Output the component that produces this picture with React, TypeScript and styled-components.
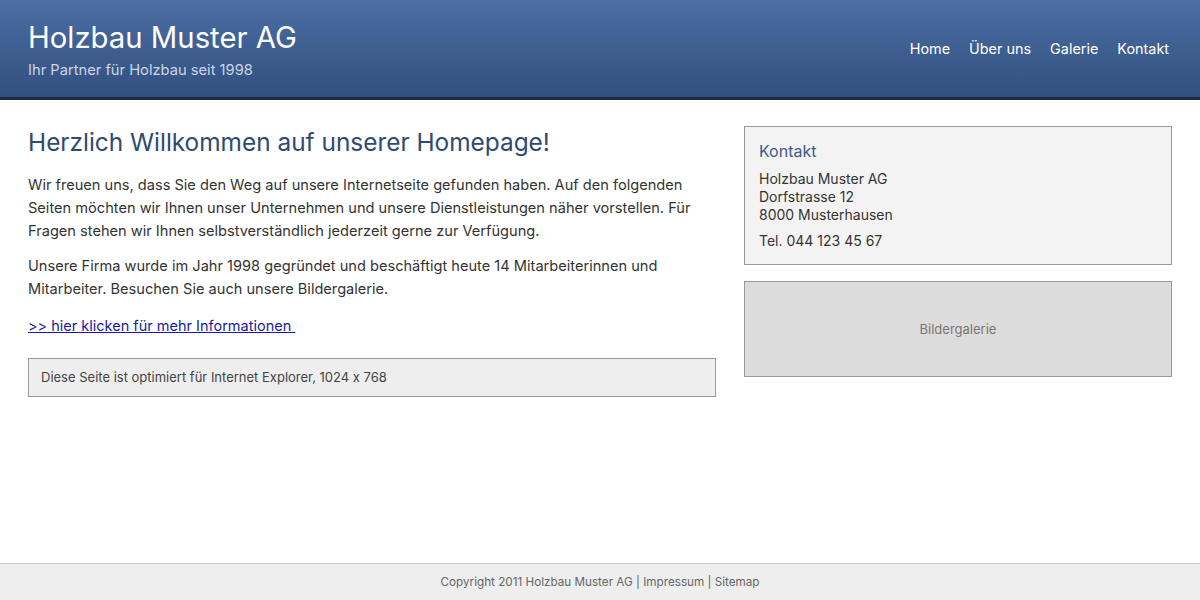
import styled, { createGlobalStyle } from 'styled-components';

const GlobalStyle = createGlobalStyle`
  html, body {
    margin: 0;
    padding: 0;
    height: 100%;
  }
  body {
    font-family: Inter, "Noto Sans", "Liberation Sans", sans-serif;
    font-feature-settings: "calt" 0;
    color: #333;
    background: #fff;
  }
  #root {
    min-height: 100%;
    display: flex;
    flex-direction: column;
  }
`;

const Page = styled.div`
  display: flex;
  flex-direction: column;
  min-height: 600px;
`;

const Header = styled.header`
  display: flex;
  align-items: center;
  justify-content: space-between;
  height: 97px;
  padding: 0 31px 0 28px;
  background: linear-gradient(to bottom, #4b6ea4, #32507e);
  border-bottom: 3px solid #1e2d42;
  box-sizing: content-box;
`;

const Brand = styled.div`
  display: flex;
  flex-direction: column;
  gap: 6px;
  margin-top: 2px;
`;

const Title = styled.h1`
  margin: 0;
  font-size: 29.3px;
  font-weight: 400;
  color: #fff;
  line-height: 34px;
`;

const Tagline = styled.div`
  font-size: 14.7px;
  color: #c9d5e8;
`;

const Nav = styled.nav`
  display: flex;
  gap: 19px;
`;

const NavLink = styled.a`
  color: #fff;
  font-size: 14.4px;
  text-decoration: none;
`;

const Main = styled.main`
  flex: 1;
  display: grid;
  grid-template-columns: 688px 428px;
  gap: 28px;
  padding: 26px 28px;
  align-items: start;
`;

const Content = styled.div`
  display: flex;
  flex-direction: column;
`;

const Heading = styled.h2`
  margin: 1px 0 17px;
  font-size: 24.4px;
  font-weight: 400;
  color: #2e4a72;
  line-height: 30px;
`;

const Text = styled.p`
  margin: 0 0 12px;
  font-size: 14.6px;
  line-height: 23px;
  color: #333;
`;

const MoreLink = styled.a`
  display: inline-block;
  margin: 4px 0 24px;
  font-size: 14.5px;
  color: #1a1aa6;
  text-decoration: underline;
  white-space: pre;
`;

const Notice = styled.div`
  border: 1px solid #999;
  background: #eee;
  padding: 11px 12px;
  font-size: 13px;
  color: #444;
  line-height: 15px;
`;

const Sidebar = styled.aside`
  display: flex;
  flex-direction: column;
  gap: 16px;
`;

const Box = styled.div<{ $bg: string }>`
  border: 1px solid #999;
  background: ${(p) => p.$bg};
`;

const ContactBox = styled(Box)`
  padding: 14px 14px 14px;
`;

const BoxTitle = styled.h3`
  margin: 0 0 9px;
  font-size: 16px;
  font-weight: 400;
  color: #3b5a85;
  line-height: 20px;
`;

const Address = styled.div`
  font-size: 14px;
  line-height: 18px;
  color: #333;
`;

const Phone = styled.div`
  margin-top: 8px;
  font-size: 14px;
  line-height: 18px;
  color: #333;
`;

const Gallery = styled(Box)`
  height: 94px;
  display: flex;
  align-items: center;
  justify-content: center;
  font-size: 13px;
  color: #777;
`;

const Footer = styled.footer`
  display: flex;
  align-items: center;
  justify-content: center;
  border-top: 1px solid #ccc;
  background: #eee;
  font-size: 11.7px;
  color: #666;
  padding-bottom: 1px;
  box-sizing: border-box;
  height: 37px;
`;

export default function App() {
  return (
    <>
      <GlobalStyle />
      <Page>
        <Header>
          <Brand>
            <Title>Holzbau Muster AG</Title>
            <Tagline>Ihr Partner für Holzbau seit 1998</Tagline>
          </Brand>
          <Nav>
            <NavLink href="#">Home</NavLink>
            <NavLink href="#">Über uns</NavLink>
            <NavLink href="#">Galerie</NavLink>
            <NavLink href="#">Kontakt</NavLink>
          </Nav>
        </Header>
        <Main>
          <Content>
            <Heading>Herzlich Willkommen auf unserer Homepage!</Heading>
            <Text>
              Wir freuen uns, dass Sie den Weg auf unsere Internetseite gefunden haben. Auf den folgenden
              Seiten möchten wir Ihnen unser Unternehmen und unsere Dienstleistungen näher vorstellen. Für
              Fragen stehen wir Ihnen selbstverständlich jederzeit gerne zur Verfügung.
            </Text>
            <Text>
              Unsere Firma wurde im Jahr 1998 gegründet und beschäftigt heute 14 Mitarbeiterinnen und
              Mitarbeiter. Besuchen Sie auch unsere Bildergalerie.
            </Text>
            <div>
              <MoreLink href="#">{'>> hier klicken für mehr Informationen '}</MoreLink>
            </div>
            <Notice>Diese Seite ist optimiert für Internet Explorer, 1024 x 768</Notice>
          </Content>
          <Sidebar>
            <ContactBox $bg="#f3f3f3">
              <BoxTitle>Kontakt</BoxTitle>
              <Address>
                Holzbau Muster AG
                <br />
                Dorfstrasse 12
                <br />
                8000 Musterhausen
              </Address>
              <Phone>Tel. 044 123 45 67</Phone>
            </ContactBox>
            <Gallery $bg="#dcdcdc">Bildergalerie</Gallery>
          </Sidebar>
        </Main>
        <Footer>Copyright 2011 Holzbau Muster AG | Impressum | Sitemap</Footer>
      </Page>
    </>
  );
}
